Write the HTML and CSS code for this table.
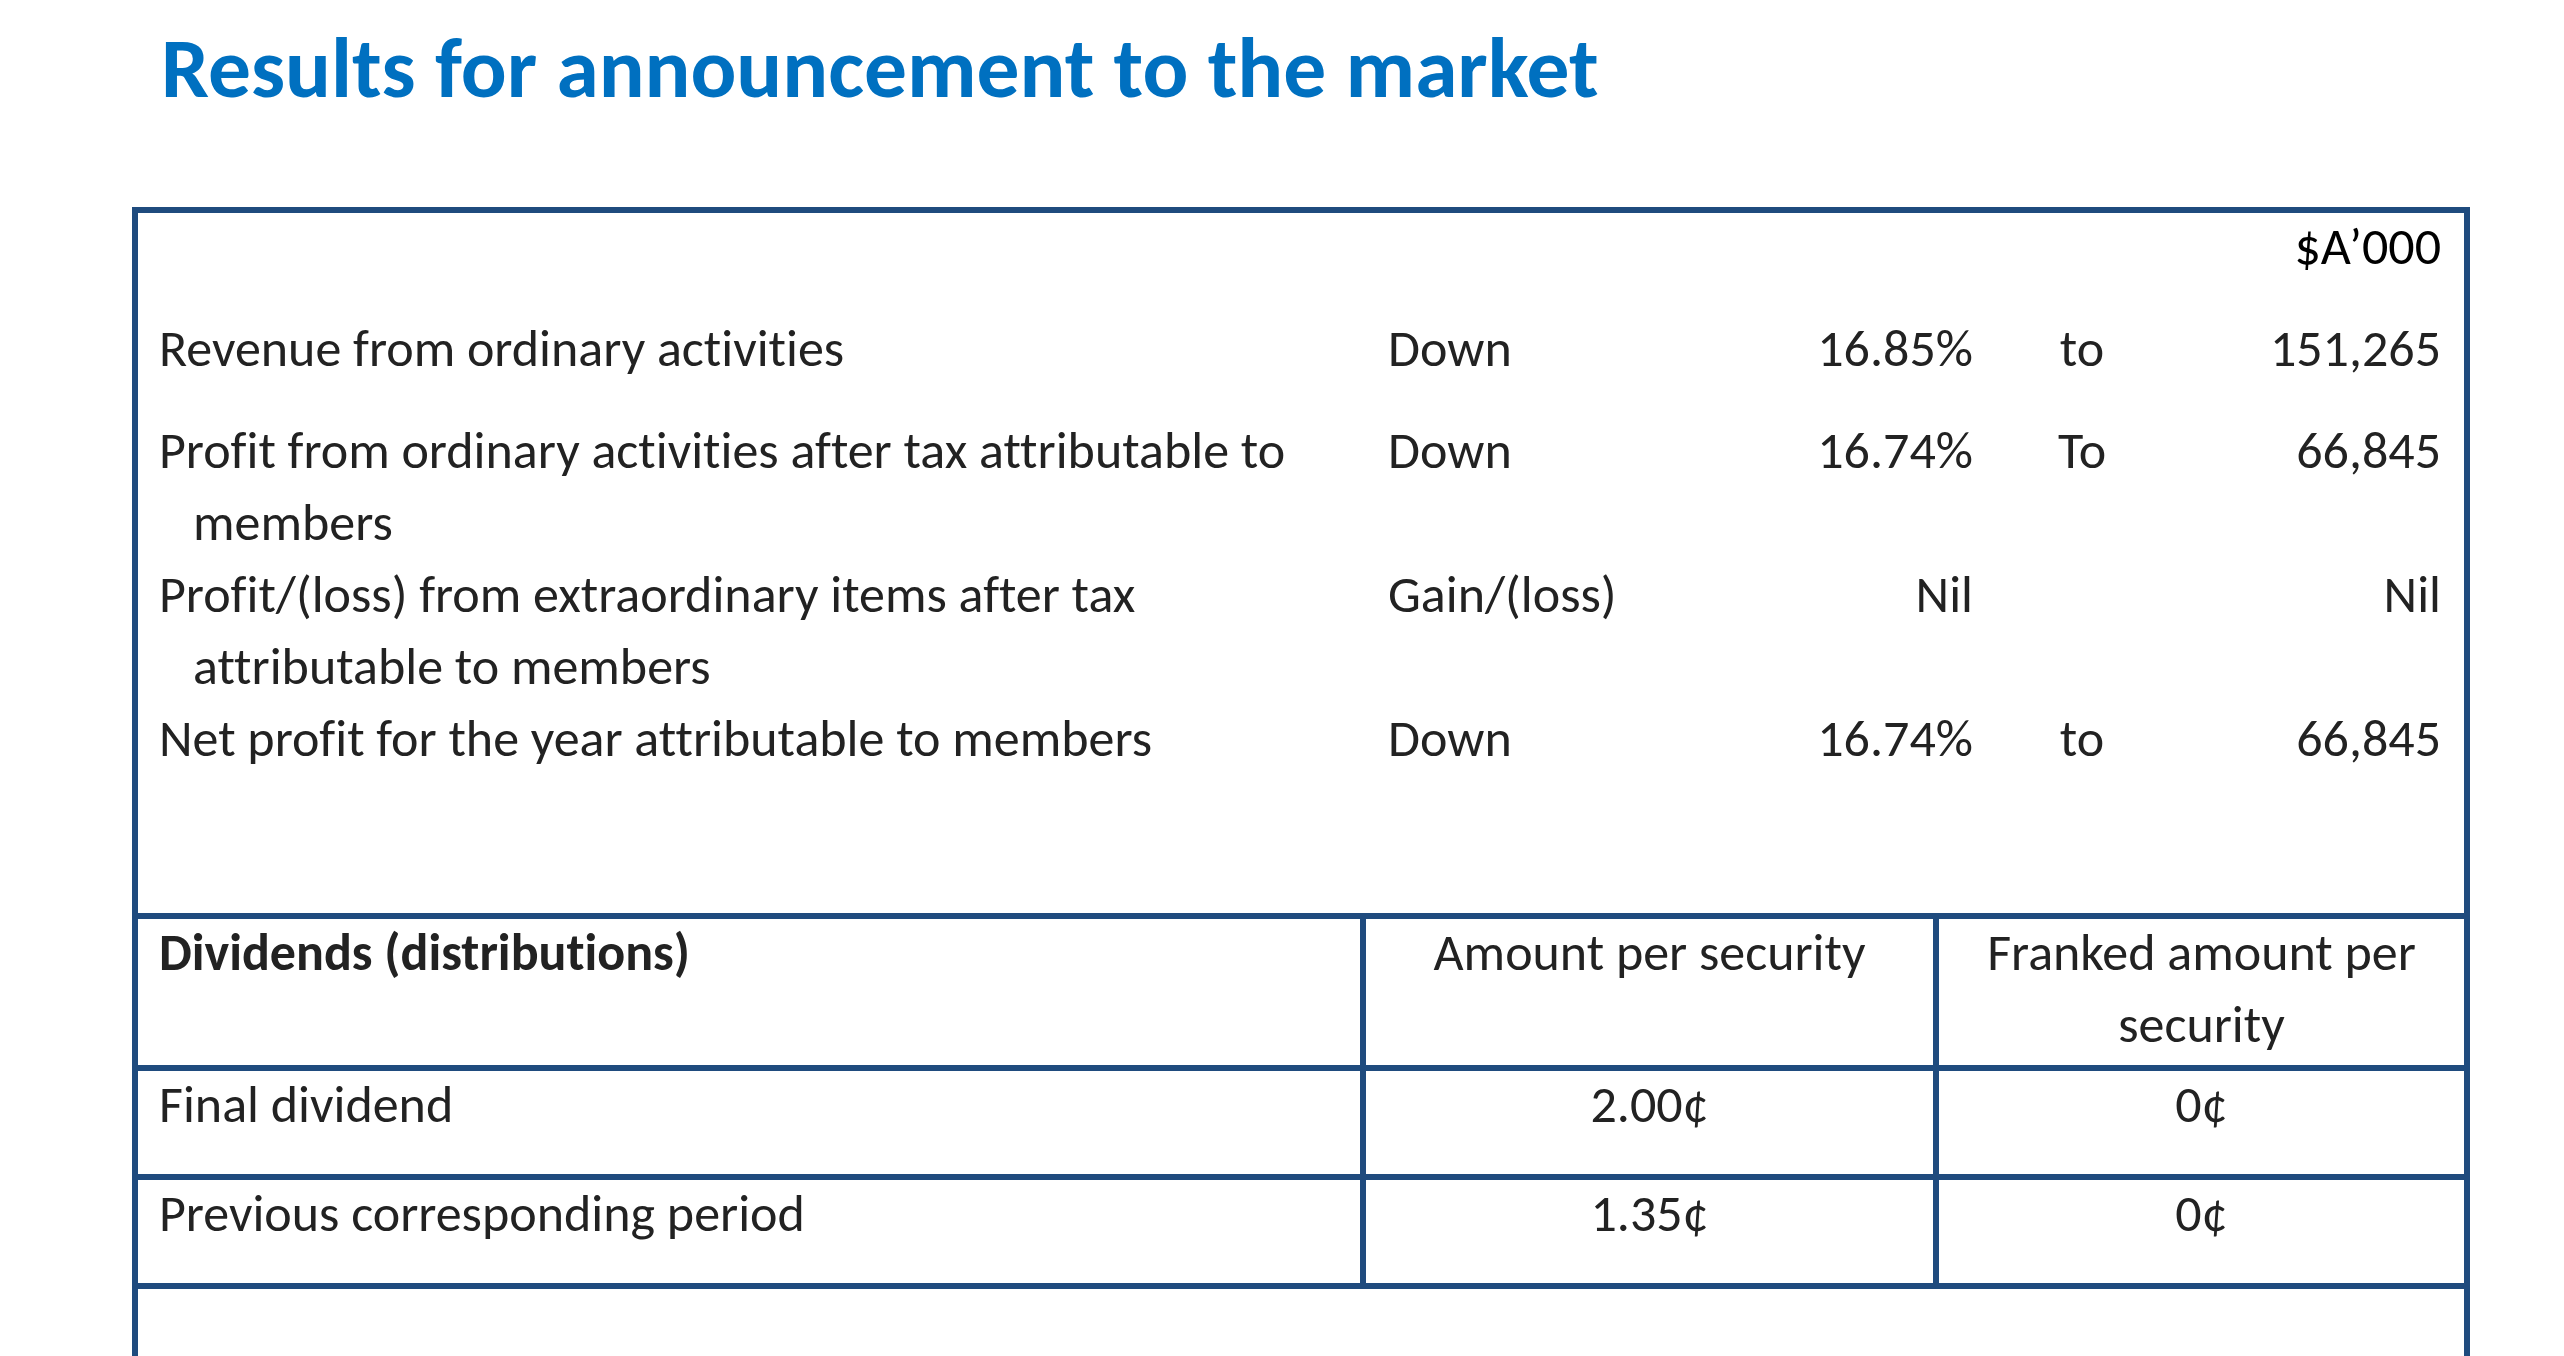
FILE: index.html
```html
<!DOCTYPE html>
<html lang="en">
<head>
<meta charset="utf-8">
<title>Results for announcement to the market</title>
<link rel="stylesheet" href="styles.css">
</head>
<body>
<h1 class="title">Results for announcement to the market</h1>
<div class="report">
  <div class="results">
    <div class="row row-spaced">
      <div class="c1"></div><div class="c2"></div><div class="c3"></div><div class="c4"></div>
      <div class="c5 unit">$A’000</div>
    </div>
    <div class="row row-spaced">
      <div class="c1 label">Revenue from ordinary activities</div>
      <div class="c2">Down</div>
      <div class="c3">16.85%</div>
      <div class="c4">to</div>
      <div class="c5">151,265</div>
    </div>
    <div class="row">
      <div class="c1 label">Profit from ordinary activities after tax attributable to<br>members</div>
      <div class="c2">Down</div>
      <div class="c3">16.74%</div>
      <div class="c4">To</div>
      <div class="c5">66,845</div>
    </div>
    <div class="row">
      <div class="c1 label">Profit/(loss) from extraordinary items after tax<br>attributable to members</div>
      <div class="c2">Gain/(loss)</div>
      <div class="c3">Nil</div>
      <div class="c4"></div>
      <div class="c5">Nil</div>
    </div>
    <div class="row">
      <div class="c1 label">Net profit for the year attributable to members</div>
      <div class="c2">Down</div>
      <div class="c3">16.74%</div>
      <div class="c4">to</div>
      <div class="c5">66,845</div>
    </div>
  </div>
  <div class="dividends">
    <div class="drow dhead">
      <div class="d1 strong">Dividends (distributions)</div>
      <div class="d2">Amount per security</div>
      <div class="d3">Franked amount per<br>security</div>
    </div>
    <div class="drow">
      <div class="d1">Final dividend</div>
      <div class="d2">2.00¢</div>
      <div class="d3">0¢</div>
    </div>
    <div class="drow dlast">
      <div class="d1">Previous corresponding period</div>
      <div class="d2">1.35¢</div>
      <div class="d3">0¢</div>
    </div>
  </div>
  <div class="rest"></div>
</div>
</body>
</html>
```
FILE: styles.css
```css
html, body {
  margin: 0;
  padding: 0;
  background: #ffffff;
}
body {
  font-family: Carlito, Calibri, "Open Sans", sans-serif;
  font-variant-ligatures: none;
  color: #222222;
  overflow: hidden;
  height: 1356px;
}
.title {
  margin: 26px 0 0 161px;
  font-size: 85.5px;
  line-height: 85px;
  font-weight: 700;
  color: #0070c0;
  white-space: nowrap;
}
.report {
  margin: 96px 0 0 132px;
  width: 2326px;
  height: 1200px;
  border: 6px solid #1f4b7e;
  border-bottom: none;
}
.results {
  margin-top: -3px;
  padding: 0 23px 139px 21px;
  font-size: 52px;
  line-height: 72px;
}
.row {
  display: grid;
  grid-template-columns: 1229px 312px 273px 218px 250px;
}
.row-spaced {
  padding-bottom: 30px;
}
.row > div {
  min-height: 72px;
  white-space: nowrap;
}
.label {
  padding-left: 34px;
  text-indent: -34px;
}
.c3, .c5 { text-align: right; }
.c4 { text-align: center; }
.unit { color: #000; }
.dividends {
  font-size: 52px;
  line-height: 72px;
}
.drow {
  display: grid;
  grid-template-columns: 1222px 573px 531px;
  border-top: 6px solid #1f4b7e;
  height: 103px;
}
.dhead { height: 146px; }
.dlast { border-bottom: 6px solid #1f4b7e; }
.drow > div {
  margin-top: -3px;
  white-space: nowrap;
}
.d1 { padding-left: 21px; }
.d2, .d3 {
  border-left: 6px solid #1f4b7e;
  text-align: center;
}
.strong { font-weight: 700; }
```
